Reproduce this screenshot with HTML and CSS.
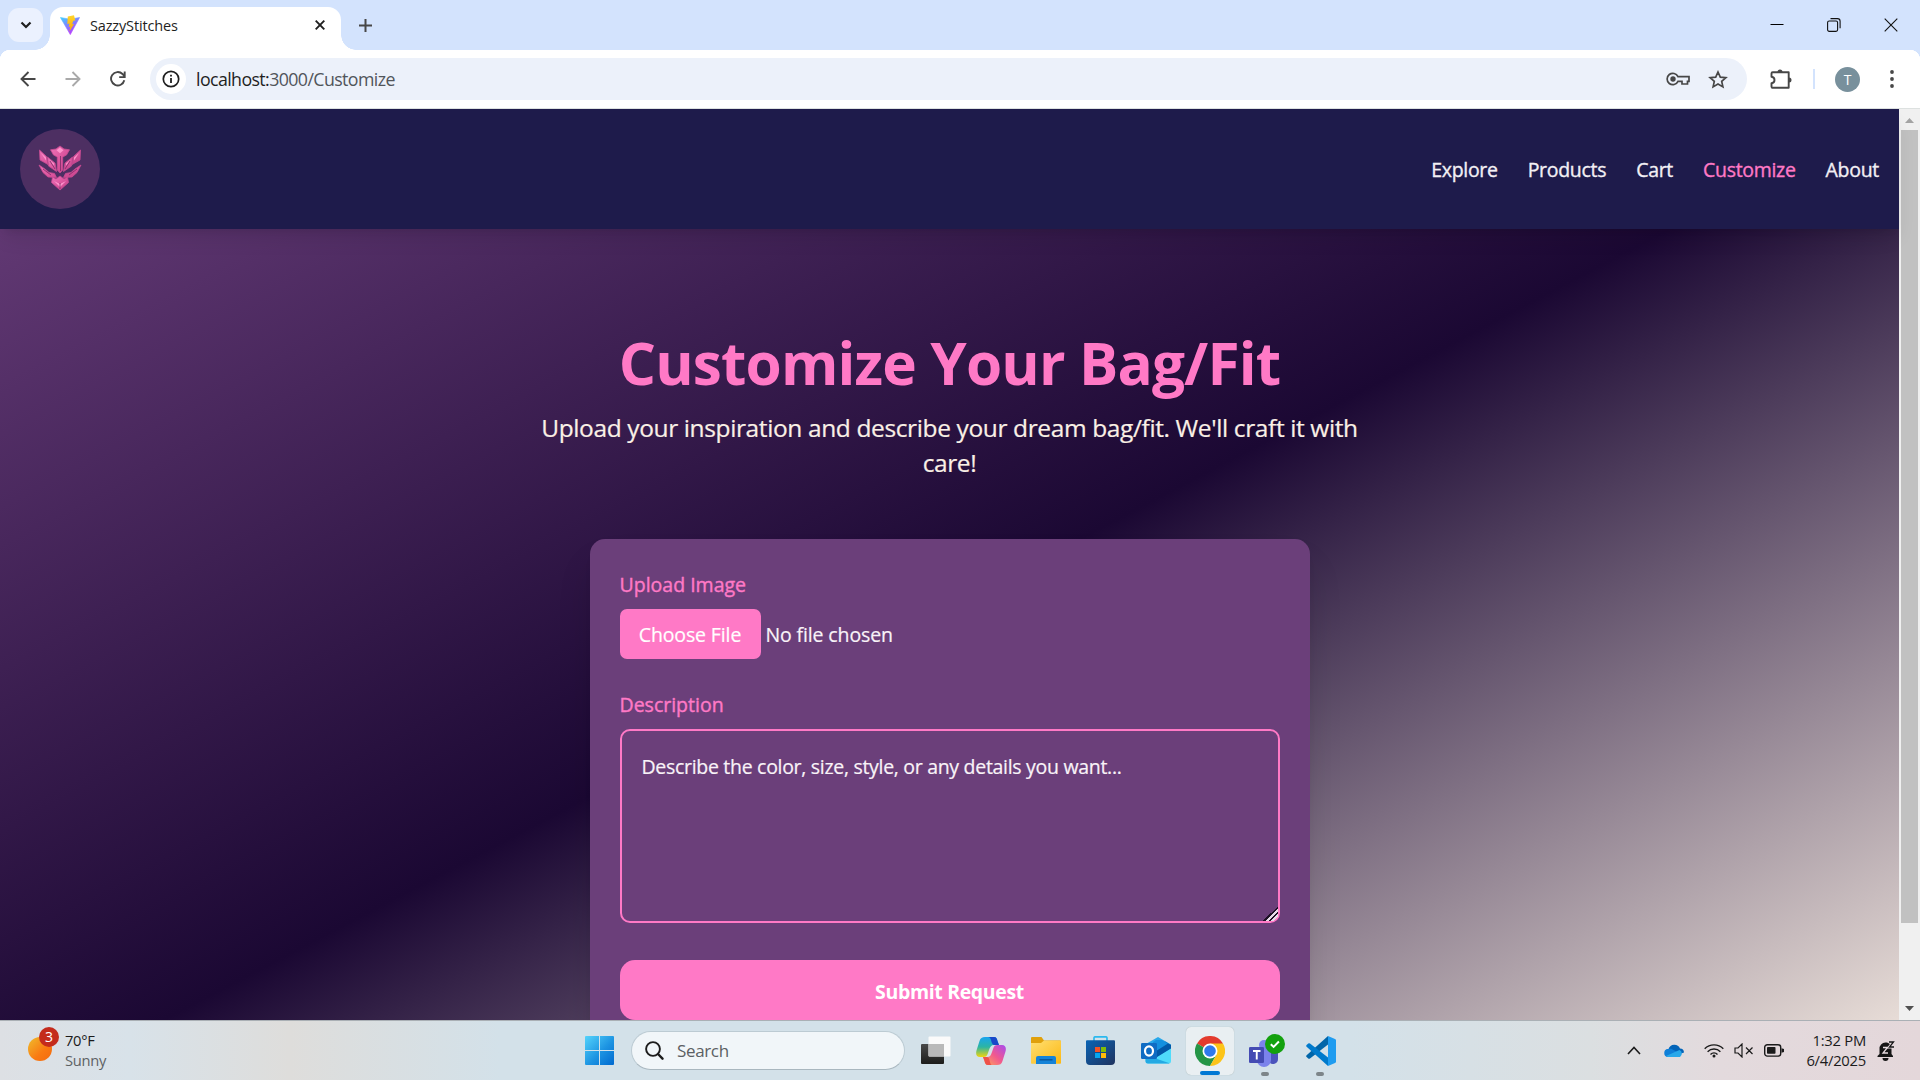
FILE: index.html
```html
<!DOCTYPE html>
<html lang="en">
<head>
<meta charset="utf-8">
<title>SazzyStitches</title>
<link rel="stylesheet" href="styles.css">
</head>
<body>
<div class="screen">
  <div class="tabstrip">
    <div class="tab-search"><svg width="12" height="8" viewBox="0 0 12 8"><path d="M1.5 1.5 6 6l4.500-4.500" fill="none" stroke="#1f1f1f" stroke-width="2.200"/></svg></div>
    <div class="tab">
      <svg class="favicon" width="20" height="20" viewBox="0 0 20 20">
        <defs>
          <linearGradient id="vite" x1="0" y1="0" x2=".6" y2="1"><stop offset="0" stop-color="#41d1ff"/><stop offset="1" stop-color="#bd34fe"/></linearGradient>
          <linearGradient id="bolt" x1="0" y1="0" x2="0" y2="1"><stop offset="0" stop-color="#ffd62e"/><stop offset="1" stop-color="#ffa800"/></linearGradient>
        </defs>
        <path d="M.4 2.500 10 4.200l9.600-1.700L10.300 19.600z" fill="url(#vite)" stroke="url(#vite)" stroke-linejoin="round" stroke-width=".6"/>
        <path d="M14 .2 7.800 1.400l-.5 7.500 2.200-.4-.8 3.500 1.600-.4-.9 4.800 4.700-7.500-2 .4 1.200-3.500 2-.4z" fill="url(#bolt)"/>
      </svg>
      <span class="tab-title">SazzyStitches</span>
      <svg width="10" height="10" viewBox="0 0 10 10"><path d="M.7.7l8.600 8.600M9.300.7.700 9.300" stroke="#1f1f1f" stroke-width="1.900"/></svg>
    </div>
    <svg class="new-tab" width="13" height="13" viewBox="0 0 13 13"><path d="M6.500 0v13M0 6.500h13" stroke="#474747" stroke-width="2"/></svg>
    <div class="window-controls">
      <svg width="14" height="14" viewBox="0 0 14 14"><path d="M.5 6.500h13" stroke="#000" stroke-width="1"/></svg>
      <svg width="14" height="14" viewBox="0 0 14 14" fill="none" stroke="#111" stroke-width="1.100"><rect x=".6" y="3" width="10" height="10.400" rx="1.600"/><path d="M3.500.6h7a2.600 2.600 0 0 1 2.600 2.600v7"/></svg>
      <svg width="14" height="14" viewBox="0 0 14 14"><path d="M.7.7l12.600 12.600M13.300.7.700 13.300" stroke="#111" stroke-width="1.100"/></svg>
    </div>
  </div>

  <div class="toolbar">
    <div class="nav-buttons">
      <svg width="16" height="16" viewBox="0 0 16 16" fill="none" stroke="#474747" stroke-width="1.900"><path d="M15.500 8H2M8.500 1 1.500 8l7 7"/></svg>
      <svg width="16" height="16" viewBox="0 0 16 16" fill="none" stroke="#a9a9a9" stroke-width="1.900"><path d="M.5 8H14M7.500 1l7 7-7 7"/></svg>
      <svg width="16" height="16" viewBox="0 0 16 16" fill="none" stroke="#474747" stroke-width="1.900"><path d="M14.300 9.300A6.700 6.700 0 1 1 12.500 3l1.900 2.200M14.700.5v5.600H9.200"/></svg>
    </div>
    <div class="omnibox">
      <div class="site-info"><svg width="18" height="18" viewBox="0 0 18 18"><circle cx="9" cy="9" r="7.700" fill="none" stroke="#1f1f1f" stroke-width="1.700"/><path d="M9 8v5M9 4.700v1.900" stroke="#1f1f1f" stroke-width="1.800"/></svg></div>
      <div class="url">localhost:<span>3000/Customize</span></div>
      <svg width="24" height="14" viewBox="0 0 24 14" fill="none" stroke="#474747" stroke-width="1.700"><path d="M12 4.600A5.700 5.700 0 1 0 12 9.400h4V12h5.500V9.400H23V4.600z"/><circle cx="7" cy="7" r="2.700" fill="#474747" stroke="none"/></svg>
      <svg class="star" width="20" height="19" viewBox="0 0 20 19"><path d="M10 2l2.300 5.100 5.600.6-4.200 3.700 1.200 5.500L10 14.100l-4.900 2.800 1.200-5.500L2.100 7.700l5.600-.6z" fill="none" stroke="#474747" stroke-width="1.700"/></svg>
    </div>
    <svg class="puzzle" width="22" height="21" viewBox="0 0 22 21"><path d="M2.700 3.300h16v15.500h-16c-.6 0-1.200-.5-1.200-1.200v-3.400c4-.5 4-6 0-6.500V4.500c0-.7.500-1.200 1.200-1.200z" fill="none" stroke="#474747" stroke-width="1.900" stroke-linejoin="round"/><path d="M7.500 3a2.500 2.500 0 0 1 5 0zM19 8.500a2.500 2.500 0 0 1 0 5z" fill="#474747"/></svg>
    <i class="divider"></i>
    <div class="avatar">T</div>
    <svg class="kebab" width="4" height="18" viewBox="0 0 4 18" fill="#474747"><circle cx="2" cy="2" r="1.900"/><circle cx="2" cy="9" r="1.900"/><circle cx="2" cy="16" r="1.900"/></svg>
  </div>

  <div class="viewport">
    <div class="page">
      <header class="site-header">
        <div class="logo">
          <svg width="44" height="46" viewBox="0 0 44 46">
            <defs><linearGradient id="gem" x1="0" y1="0" x2="1" y2="1"><stop offset="0" stop-color="#ee74b8"/><stop offset=".5" stop-color="#dd569f"/><stop offset="1" stop-color="#c04088"/></linearGradient></defs>
            <g fill="url(#gem)" stroke="#c94a93" stroke-width=".8" stroke-linejoin="round">
              <path d="M22 1l4 3 5.500.8-3 5.200-3.800 2V25L22 28l-2.700-3V12l-3.800-2-3-5.200L18 4z"/>
              <path d="M1.500 5l7 6.500 1.500 8-8-4.500zM42.500 5l-7 6.500-1.500 8 8-4.500z"/>
              <path d="M9.500 12l7.500 6 1.500 8.500-8-5.500zM34.500 12 27 18l-1.500 8.500 8-5.500z"/>
              <path d="M1 20l6 4 4 3.500 5.500 1 2 4-8.500-.5-5-4.500zM43 20l-6 4-4 3.500-5.500 1-2 4 8.500-.5 5-4.500z"/>
              <path d="M22 31l4 3 3.500-2 1 5.500-8.500 7.500-8.500-7.500 1-5.500 3.500 2z"/>
            </g>
            <g fill="#ff94cd"><path d="M22 2.500l3.500 2.800-3.500 3-3.500-3zM3 8l5 4.500v3zM41 8l-5 4.500v3zM11 14.500l5 4v2zM33 14.500l-5 4v2zM16 36l6 3 6-3-6 6z"/></g>
            <path d="M22.500 11v15M22 38v6M5 24l8 6M39 24l-8 6M12 16l5 8M32 16l-5 8" stroke="#7b2b66" stroke-width=".8"/>
          </svg>
        </div>
        <nav class="site-nav">
          <a>Explore</a><a>Products</a><a>Cart</a><a class="active">Customize</a><a>About</a>
        </nav>
      </header>
      <main>
        <section class="intro">
          <h1>Customize Your Bag/Fit</h1>
          <p>Upload your inspiration and describe your dream bag/fit. We'll craft it with care!</p>
        </section>
        <form class="card">
          <label for="image">Upload Image</label>
          <input id="image" type="file">
          <label for="description">Description</label>
          <textarea id="description" placeholder="Describe the color, size, style, or any details you want..."></textarea>
          <button type="button">Submit Request</button>
        </form>
      </main>
    </div>
    <div class="scrollbar">
      <svg width="9" height="5" viewBox="0 0 9 5"><path d="M0 5 4.500 0 9 5z" fill="#a3a3a3"/></svg>
      <div class="track"><div class="thumb"></div></div>
      <svg width="9" height="5" viewBox="0 0 9 5"><path d="M0 0h9L4.500 5z" fill="#505050"/></svg>
    </div>
  </div>

  <div class="taskbar">
    <div class="weather">
      <div class="sun"><b>3</b></div>
      <div class="weather-text"><span>70°F</span><span class="muted">Sunny</span></div>
    </div>
    <div class="apps">
      <svg class="start" width="29" height="29" viewBox="0 0 29 29"><defs><linearGradient id="win" x1="0" y1="0" x2="1" y2="1"><stop offset="0" stop-color="#55d3fb"/><stop offset=".55" stop-color="#1d94e2"/><stop offset="1" stop-color="#0069cf"/></linearGradient></defs><path d="M1 0h13v14H0V1a1 1 0 0 1 1-1zM15 0h13a1 1 0 0 1 1 1v13H15zM0 15h14v14H1a1 1 0 0 1-1-1zM15 15h14v13a1 1 0 0 1-1 1H15z" fill="url(#win)"/></svg>
      <div class="search"><svg width="19" height="19" viewBox="0 0 19 19" fill="none" stroke="#1c1c1c"><circle cx="8" cy="8" r="6.900" stroke-width="1.900"/><path d="M13 13l4.500 4.700" stroke-width="2.400" stroke-linecap="round"/></svg>Search</div>
      <div class="app"><svg width="30" height="29" viewBox="0 0 30 29"><defs><linearGradient id="tv" x1="0" y1="0" x2="0" y2="1"><stop offset="0" stop-color="#494949"/><stop offset="1" stop-color="#1d1d1b"/></linearGradient></defs><rect y="8" width="23" height="20" rx="1" fill="url(#tv)"/><rect x="7.500" y=".5" width="22" height="20" rx="1" fill="#fafafa"/><path d="M7.500 8H23v12.500H8.500a1 1 0 0 1-1-1z" fill="#b9b9b9"/></svg></div>
      <div class="app"><svg width="30" height="28" viewBox="0 0 30 28"><defs><linearGradient id="cpa" x1="0" y1="0" x2="0" y2="1"><stop offset="0" stop-color="#19a4ef"/><stop offset=".5" stop-color="#2cb5a3"/><stop offset="1" stop-color="#f1d50d"/></linearGradient><linearGradient id="cpb" x1="1" y1="0" x2="0" y2="1"><stop offset="0" stop-color="#a64bf0"/><stop offset=".5" stop-color="#f1588f"/><stop offset="1" stop-color="#ffac55"/></linearGradient></defs>
        <path d="M9 0h9c2.500 0 3 2 3.500 4L23 8h-5c-3 0-4 2-5 5l-1.200 3.500C11 19 10 20 7.500 20H4c-3.500 0-4.500-3-3.500-6.500L3.500 4C4.500 1 6 0 9 0z" fill="url(#cpa)"/><path d="M12 0h6c2.500 0 3 2 3.500 4L23 8h-5c-1.500 0-2.500-3-3-5S13.500 0 12 0z" fill="#1848c9"/>
        <path d="M21 28h-9c-2.500 0-3-2-3.500-4L7 20h4c3 0 4-2 5-5l1.200-3.500C18 9 19 8 21.500 8H26c3.500 0 4.500 3 3.500 6.500L26.500 24c-1 3-2.500 4-5.500 4z" fill="url(#cpb)"/><path d="M7 20h4c2 0 2.500 3 3 5s1 3 2 3h-4c-2.500 0-3-2-3.500-4z" fill="#ee5149"/></svg></div>
      <div class="app"><svg width="30" height="27" viewBox="0 0 30 27"><defs><linearGradient id="fold" x1="0" y1="0" x2="1" y2="1"><stop offset="0" stop-color="#ffdf72"/><stop offset="1" stop-color="#fcb813"/></linearGradient></defs><path d="M1 0h9.500L13 3.500h16a1 1 0 0 1 1 1V12H0V1a1 1 0 0 1 1-1z" fill="#e0a00b"/><path d="M0 6h10l3-2.500h16a1 1 0 0 1 1 1V26a.8.800 0 0 1-.8.800H.8A.8.800 0 0 1 0 26z" fill="url(#fold)"/><path d="M5 27v-6a2 2 0 0 1 2-2h16a2 2 0 0 1 2 2v6z" fill="#1583d8"/><path d="M8.500 22.800h13" stroke="#0b5295" stroke-width="1.300"/></svg></div>
      <div class="app"><svg width="29" height="29" viewBox="0 0 29 29"><defs><linearGradient id="store" x1="0" y1="0" x2="1" y2="1"><stop offset="0" stop-color="#0a64b5"/><stop offset="1" stop-color="#20335f"/></linearGradient></defs><path d="M8 6V2a1.200 1.200 0 0 1 1.200-1.200h10.600A1.200 1.200 0 0 1 21 2v4" fill="none" stroke="#2cb9ee" stroke-width="1.700"/><path d="M1 4.300h27a1 1 0 0 1 1 1V25a4 4 0 0 1-4 4H4a4 4 0 0 1-4-4V5.300a1 1 0 0 1 1-1z" fill="url(#store)"/><path d="M9 11h5v5H9z" fill="#f35325"/><path d="M15 11h5v5h-5z" fill="#81bc06"/><path d="M9 17h5v5H9z" fill="#05a6f0"/><path d="M15 17h5v5h-5z" fill="#ffba08"/></svg></div>
      <div class="app"><svg width="30" height="27" viewBox="0 0 30 27"><path d="M4 7.500 17 0l13 7.500V13L17 20 4 13z" fill="#28a8ea"/><path d="M30 8v4L14 22 8 15 24 4.500z" fill="#0358a7"/><path d="M15 3h6l6 3.500L12 16V5z" fill="#1490df"/><path d="M30 11.500V24a2.500 2.500 0 0 1-2.500 2.500H7A2.500 2.500 0 0 1 4.500 24v-5l10 2z" fill="#4fdcfb"/><path d="M4.500 18 28.500 26.200a2.500 2.500 0 0 1-1 .3H7A2.500 2.500 0 0 1 4.500 24z" fill="#24a9e3"/><rect y="6" width="16" height="16" rx="1.200" fill="#0f6cc4"/><ellipse cx="8" cy="14" rx="4" ry="4.600" fill="none" stroke="#fff" stroke-width="2.200"/></svg></div>
      <div class="app current"><svg width="30" height="30" viewBox="0 0 30 30"><path d="M15 15 2 7.500A15 15 0 0 1 28 7.500z" fill="#e33b2e"/><path d="M15 15 2 7.500A15 15 0 0 0 15 30l6.500-11.200z" fill="#249546"/><path d="M15 7.500h13A15 15 0 0 1 15 30l6.500-11.200z" fill="#fcc419"/><circle cx="15" cy="15" r="7.500" fill="#fff"/><circle cx="15" cy="15" r="5.800" fill="#3079ec"/></svg><i></i></div>
      <div class="app running"><svg width="38" height="38" viewBox="0 0 38 38"><circle cx="25" cy="16" r="4" fill="#5059c9"/><circle cx="17" cy="13" r="5" fill="#7b83eb"/><path d="M22 17h9v10a5 5 0 0 1-9 3z" fill="#4b53bc"/><path d="M10 17h14v11a7 7 0 0 1-14 0z" fill="#7b83eb"/><rect x="2" y="15" width="15" height="16" rx="1.300" fill="#444bb3"/><path d="M6 19h7.500M9.750 19v8.500" stroke="#fff" stroke-width="1.900"/><circle cx="28" cy="12" r="10" fill="#13a10e"/><path d="M23.800 12.200l2.800 2.700 5.300-5.400" fill="none" stroke="#fff" stroke-width="2"/></svg><i></i></div>
      <div class="app running"><svg width="30" height="30" viewBox="0 0 30 30"><path d="M22 0v8.500L4 22.500a1.500 1.500 0 0 1-1.800 0L.6 21a1.200 1.200 0 0 1 0-1.700z" fill="#0065a9"/><path d="M22 30v-8.500L4 7.500a1.500 1.500 0 0 0-1.800 0L.6 9a1.200 1.200 0 0 0 0 1.700z" fill="#007acc"/><path d="M22 0l7 3a1.500 1.500 0 0 1 1 1.500v21a1.500 1.500 0 0 1-1 1.500l-7 3z" fill="#1f9cf0"/></svg><i></i></div>
    </div>
    <div class="tray">
      <svg width="14" height="9" viewBox="0 0 14 9"><path d="M1 8l6-6.500L13 8" fill="none" stroke="#1b1b1b" stroke-width="1.600"/></svg>
      <svg class="cloud" width="20" height="13" viewBox="0 0 20 13"><path d="M4.500 5A6.200 6.200 0 0 1 16 4.500a4.200 4.200 0 0 1 4 4L10 12 1 9a4 4 0 0 1 3.500-4z" fill="#0364b8"/><path d="M4.500 5c2-.6 3.500 0 5 1L17 10l-13 3a4 4 0 0 1 .5-8z" fill="#0f7fd8"/><path d="M2 12l9-4 4.500-2A4 4 0 0 1 16 13H4.500A4 4 0 0 1 2 12z" fill="#28a8ea"/></svg>
      <svg class="wifi" width="20" height="15" viewBox="0 0 20 15" fill="none" stroke="#1b1b1b" stroke-width="1.400"><path d="M.7 5.800a13 13 0 0 1 18.600 0M3.600 8.700a9 9 0 0 1 12.800 0M6.500 11.400a5 5 0 0 1 7 0"/><circle cx="10" cy="13" r="1.500" fill="#1b1b1b" stroke="none"/></svg>
      <svg class="mute" width="20" height="15" viewBox="0 0 20 15" fill="none" stroke="#1b1b1b" stroke-width="1.200"><path d="M1 5h3l4-4v13l-4-4H1zM12 4.500l6.500 6.500M18.500 4.500 12 11"/></svg>
      <svg class="battery" width="20" height="13" viewBox="0 0 20 13"><rect x=".7" y=".7" width="16" height="11.400" rx="2.600" fill="none" stroke="#1b1b1b" stroke-width="1.400"/><rect x="3" y="3" width="8.500" height="6.800" rx=".8" fill="#1b1b1b"/><path d="M17.500 4.200 20 5v3l-2.500.8z" fill="#1b1b1b"/></svg>
      <div class="clock"><span>1:32 PM</span><span>6/4/2025</span></div>
      <svg width="18" height="20" viewBox="0 0 18 20"><path d="M2.500 13V8a6 6 0 0 1 6-6.500c4 0 6 2.500 6 6.500v5l1.500 2v1H.500v-1z" fill="#161616"/><path d="M5.500 17h6a3 3 0 0 1-6 0z" fill="#161616"/><path d="M6 6.500h4.500L6 12h5" fill="none" stroke="#e7dce0" stroke-width="1.300"/><path d="M12 .8h4.500L12.500 6H17" fill="none" stroke="#e7dce0" stroke-width="3"/><path d="M12 1h4.500L12.500 6H17" fill="none" stroke="#161616" stroke-width="1.300"/></svg>
    </div>
  </div>
</div>
</body>
</html>
```
FILE: styles.css
```css
* { box-sizing: border-box; }
body { margin: 0; font-family: "Open Sans", "Noto Sans", sans-serif; }
svg { display: block; flex: none; }

.screen { width: 1920px; height: 1080px; overflow: hidden; display: flex; flex-direction: column; }

/* Tab strip */
.tabstrip { height: 50px; flex: none; display: flex; align-items: center; background: #d3e3fd; padding-left: 8px; }
.tab-search { width: 35px; height: 34px; border-radius: 11px; background: #ebf1fe; display: flex; align-items: center; justify-content: center; }
.tab { position: relative; width: 291px; height: 43px; margin: 7px 0 0 7px; padding: 0 16px 7px 10px; border-radius: 13px 13px 0 0; background: #fff; display: flex; align-items: center; }
.tab::before, .tab::after { content: ""; position: absolute; bottom: 0; width: 15px; height: 15px; }
.tab::before { left: -15px; background: radial-gradient(circle at 0 0, transparent 14.500px, #fff 15px); }
.tab::after { right: -15px; background: radial-gradient(circle at 100% 0, transparent 14.500px, #fff 15px); }
.tab-title { flex: 1; margin-left: 10px; font-size: 14.500px; letter-spacing: -0.150px; color: #1f1f1f; }
.new-tab { margin-left: 18px; }
.window-controls { margin: 0 22px 0 auto; display: flex; gap: 43px; }

/* Toolbar */
.toolbar { height: 59px; flex: none; display: flex; align-items: center; border-bottom: 1px solid #dde1e0; padding: 0 23px 0 20px; background: radial-gradient(circle at 10px 10px, #fff 10px, #d3e3fd 10.500px) 0 0 / 10px 10px no-repeat, radial-gradient(circle at 0 10px, #fff 10px, #d3e3fd 10.500px) 100% 0 / 10px 10px no-repeat, #fff; }
.nav-buttons { display: flex; gap: 29px; width: 130px; }
.omnibox { width: 1597px; height: 42px; border-radius: 21px; background: #ecf1fa; display: flex; align-items: center; padding: 0 19px 0 6px; }
.site-info { width: 30px; height: 30px; border-radius: 50%; background: #fff; display: flex; align-items: center; justify-content: center; }
.url { flex: 1; margin-left: 10px; font-size: 17.800px; letter-spacing: -0.600px; color: #1f1f1f; }
.url span { color: #51555a; }
.star { margin-left: 18px; }
.puzzle { margin-left: 23px; }
.divider { width: 2px; height: 20px; margin-left: 21px; background: #d3e3fd; }
.avatar { width: 25px; height: 25px; margin-left: 20px; border-radius: 50%; background: #78909c; color: #fff; font-size: 14px; line-height: 25px; text-align: center; }
.kebab { margin-left: auto; margin-right: 3px; }

/* Page area */
.viewport { height: 911px; flex: none; overflow: hidden; display: flex; }
.page { width: 1899px; height: 997px; background: linear-gradient(to bottom right, #6b3f7c, #1b0833 50%, #faf0e6); }
.site-header { position: relative; height: 120px; padding: 0 20px; display: flex; align-items: center; justify-content: space-between; background: #1e1b4b; box-shadow: 0 12px 19px -4px rgba(0,0,0,.1), 0 5px 8px -5px rgba(0,0,0,.1); }
.logo { width: 80px; height: 80px; border-radius: 50%; background: #4d2f62; display: flex; align-items: center; justify-content: center; padding-bottom: 2px; }
.site-nav { display: flex; gap: 30px; color: #f3f0f4; font-size: 19.500px; letter-spacing: -0.300px; -webkit-text-stroke: .35px; padding-top: 1px; }
.site-nav .active { color: #ff79c6; }

main { padding-top: 102px; }
.intro { width: 840px; height: 208px; margin: 0 auto; text-align: center; }
h1 { margin: 0; font-size: 58.500px; letter-spacing: -0.850px; line-height: 62px; font-weight: 700; color: #ff79c6; }
.intro p { margin: 17px 0 0; font-size: 24.500px; letter-spacing: -0.380px; line-height: 35px; color: #faf0e6; -webkit-text-stroke: .2px; }

.card { width: 720px; height: 520px; margin: 0 auto; padding: 30px; border-radius: 15px; background: #6b3f7a; box-shadow: 0 25px 38px -4px rgba(0,0,0,.12), 0 10px 12px -6px rgba(0,0,0,.1); }
.card label { display: block; height: 30px; line-height: 32px; margin-bottom: 10px; font-size: 19.500px; color: #ff79c6; -webkit-text-stroke: .4px; }
.card input { display: block; width: 100%; height: 50px; margin-bottom: 30px; font: 19.500px/30px "Open Sans", sans-serif; letter-spacing: -0.130px; color: #f9f3f8; -webkit-text-stroke: .2px; }
.card input::file-selector-button { height: 50px; width: 141px; padding: 1px 0 0; margin-right: 5px; border: 0; border-radius: 7px; background: #ff79c6; color: #fff; font: inherit; letter-spacing: inherit; }
.card textarea { display: block; width: 660px; height: 194px; margin-bottom: 37px; padding: 21px 20px 19px; border: 2px solid #ff79c6; border-radius: 10px; background: transparent; font: 19.500px/30px "Open Sans", sans-serif; letter-spacing: -0.300px; outline: 0; }
.card textarea::placeholder { color: #f9f3f8; opacity: 1; -webkit-text-stroke: .2px; }
.card textarea::-webkit-resizer { background: linear-gradient(135deg, transparent 50%, #1e1226 50% 57%, #e6dbe8 57% 67%, #1e1226 67% 74%, #e6dbe8 74% 86%, transparent 86%); }
.card button { display: block; width: 660px; height: 60px; border: 0; border-radius: 15px; background: #ff79c6; color: #fff; font: 700 19.500px/60px "Open Sans", sans-serif; letter-spacing: -0.350px; padding: 2px 0 0; }

.scrollbar { width: 21px; background: #f0f0f0; display: flex; flex-direction: column; align-items: center; padding: 9px 0; }
.track { flex: 1; width: 17px; margin: 7px 0; }
.thumb { height: 793px; background: #c1c1c1; }

/* Taskbar */
.taskbar { height: 60px; flex: none; display: flex; border-top: 1px solid #aab0b5; background: linear-gradient(90deg, #dde0e4 0, #d8e2e9 130px, #dedddb 290px, #d3e1e9 500px, #d3e1e9 1350px, #dbdfe1 1590px, #e3dadd 1720px, #e4d7da 1920px); }
.weather { width: 567px; padding: 7px 0 0 28px; display: flex; gap: 13px; }
.sun { position: relative; width: 24px; height: 24px; margin-top: 9px; border-radius: 50%; background: linear-gradient(135deg, #efbd2d, #f97a12 60%, #f36a10); }
.sun b { position: absolute; left: 11px; top: -10px; width: 20px; height: 20px; border-radius: 50%; background: #c42b1c; color: #fff; font: 14px/20px "Open Sans", sans-serif; text-align: center; }
.weather-text { display: flex; flex-direction: column; font-size: 14.700px; line-height: 20px; letter-spacing: -0.300px; color: #1b1b1b; padding-top: 2px; }
.muted { color: #5d6164; }
.apps { display: flex; align-items: center; height: 59px; }
.start { margin-left: 18px; }
.search { width: 274px; height: 39px; margin: 0 3px 0 17px; border: 1px solid #bccbd3; border-bottom-color: #a9b7bf; border-radius: 20px; background: #f1f6f9; display: flex; align-items: center; gap: 13px; padding-left: 13px; font-size: 17px; letter-spacing: -0.350px; color: #5b6063; }
.app { position: relative; width: 55px; height: 48px; display: flex; align-items: center; justify-content: center; }
.app i { position: absolute; left: 23px; bottom: -1px; width: 8px; height: 4px; border-radius: 2px; background: #7d8589; }
.current { width: 48px; margin: 0 4px 0 3px; border-radius: 5px; background: #e9eff2; box-shadow: 0 0 1px #9aa; }
.current i { left: 14px; bottom: 0; width: 20px; background: #0078d4; }
.tray { margin-left: auto; padding-right: 25px; display: flex; align-items: center; }
.cloud { margin-left: 23px; }
.wifi { margin-left: 20px; }
.mute { margin-left: 10px; }
.battery { margin-left: 10px; }
.clock { width: 82px; margin-right: 11px; padding-bottom: 2px; display: flex; flex-direction: column; text-align: right; font-size: 14.800px; line-height: 20px; letter-spacing: -0.250px; color: #1b1b1b; }
```
